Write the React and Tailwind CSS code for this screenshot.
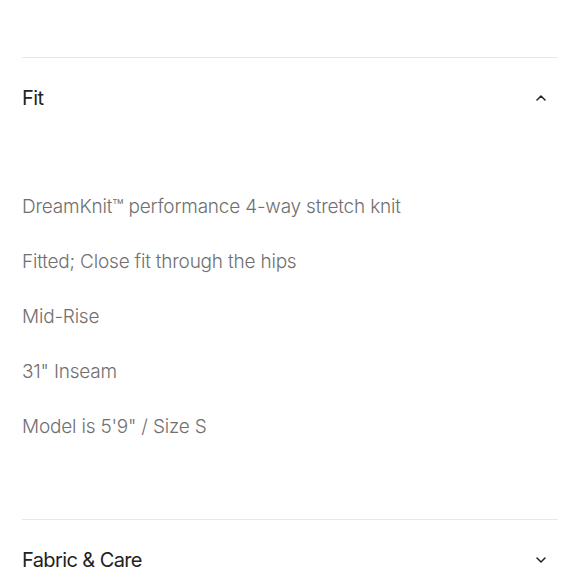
import React from "react";

function Chevron({ up }) {
  return (
    <svg width="10" height="6" viewBox="0 0 10 6" fill="none" className="shrink-0">
      {up ? (
        <path d="M1 5L5 1L9 5" stroke="#222" strokeWidth="1.5" strokeLinecap="round" strokeLinejoin="round" />
      ) : (
        <path d="M1 1L5 5L9 1" stroke="#222" strokeWidth="1.5" strokeLinecap="round" strokeLinejoin="round" />
      )}
    </svg>
  );
}

export default function App() {
  const items = [
    "DreamKnit™ performance 4-way stretch knit",
    "Fitted; Close fit through the hips",
    "Mid-Rise",
    '31" Inseam',
    'Model is 5\'9" / Size S',
  ];
  return (
    <div className="w-[580px] h-[580px] overflow-hidden bg-white" style={{ fontFamily: "Inter, 'Liberation Sans', sans-serif" }}>
      <div className="pt-[57px] px-[22px]">
        <div className="border-t border-[#e8e8e8]">
          <div className="h-[79px] flex items-center justify-between pr-[12px]">
            <span className="text-[20px] text-[#222] tracking-[-0.6px]">Fit</span>
            <Chevron up />
          </div>
          <div className="pt-[43px] pb-[64px] flex flex-col">
            {items.map((t) => (
              <div key={t} className="h-[55px] flex items-center text-[19px] font-light text-[#707070] tracking-[-0.2px]">
                {t}
              </div>
            ))}
          </div>
        </div>
        <div className="border-t border-[#e8e8e8]">
          <div className="h-[80px] flex items-center justify-between pr-[12px]">
            <span className="text-[20px] text-[#222] tracking-[-0.6px]">Fabric &amp; Care</span>
            <Chevron />
          </div>
        </div>
      </div>
    </div>
  );
}
